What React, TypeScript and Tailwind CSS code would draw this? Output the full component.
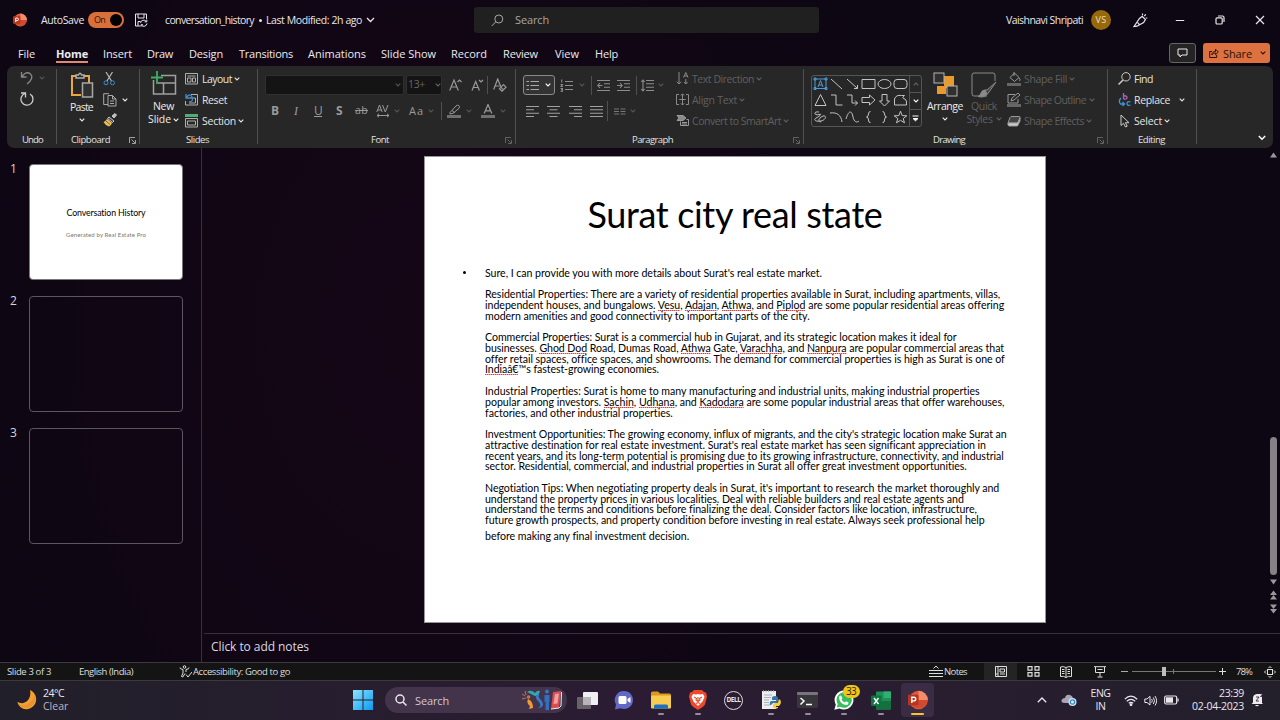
import { useLayoutEffect, useRef, type ReactNode } from 'react';

/* Text run whose tracking is adjusted so that it takes up w pixels. */
function T({ w, className = '', children }: { w: number; className?: string; children: ReactNode }) {
  const ref = useRef<HTMLSpanElement>(null);
  useLayoutEffect(() => {
    const el = ref.current;
    if (!el) return;
    el.style.letterSpacing = '0px';
    const natural = el.getBoundingClientRect().width;
    const count = (el.textContent || '').length;
    el.style.letterSpacing = `${(w - natural) / count}px`;
  }, [w]);
  return (
    <span ref={ref} className={`inline-block shrink-0 whitespace-nowrap ${className}`}>
      {children}
    </span>
  );
}

function Ic({ w, h, className = '', children, sw = 1 }: { w: number; h: number; className?: string; children: ReactNode; sw?: number }) {
  return (
    <svg width={w} height={h} viewBox={`0 0 ${w} ${h}`} fill="none" stroke="currentColor" strokeWidth={sw} className={`block shrink-0 ${className}`}>
      {children}
    </svg>
  );
}

const Chev = ({ className = '' }: { className?: string }) => (
  <Ic w={6} h={4} className={className} sw={1.1}>
    <path d="M.7.7 3 3 5.3.7" />
  </Ic>
);

const Launcher = ({ className = '' }: { className?: string }) => (
  <Ic w={7} h={7} className={className} sw={0.9}>
    <path d="M.5 6V.5H6M2.5 2.5l3.5 3.5M6.5 3v3.5H3" />
  </Ic>
);

const VSep = ({ className = '' }: { className?: string }) => <div className={`w-px shrink-0 bg-[#505050] ${className}`} />;

function PowerPoint({ s }: { s: number }) {
  return (
    <svg width={s} height={s} viewBox="0 0 20 20" className="block shrink-0">
      <circle cx="10.5" cy="10" r="9.3" fill="#e0593a" />
      <path d="M10.5.7a9.3 9.3 0 0 1 9.3 9.3h-9.3z" fill="#f58a6c" />
      <path d="M1.3 10h18.5a9.3 9.3 0 0 1-18.5 0z" fill="#cf4a2e" />
      <rect x="0" y="4.8" width="10.5" height="10.5" rx="1" fill="#b8341c" />
      <path d="M3.8 13V7.2h2.1a1.8 1.8 0 0 1 0 3.7H3.8" fill="none" stroke="#fff" strokeWidth="1.4" />
    </svg>
  );
}

function TitleBar() {
  return (
    <header className="flex h-10 shrink-0 items-center text-[10.5px] text-[#e8e6ea]">
      <div className="ml-[13px]"><PowerPoint s={14} /></div>
      <T w={43} className="ml-[14px] pt-px">AutoSave</T>
      <div className="ml-1 flex h-4 w-9 items-center justify-between rounded-full bg-[#d9703a] pl-[6px] pr-[2px] text-[9px] text-[#2b1408]">
        <T w={11}>On</T>
        <div className="size-3 rounded-full bg-black" />
      </div>
      <Ic w={14} h={14} className="ml-[10px]">
        <path d="M6 13H1.5V1h11v5M4 1v4h6V1M4 13V8.5h2.5M6.5 10a3.2 3.2 0 0 1 5.8-1.5M12.8 6.6v2.2h-2.2M13 10.5a3.2 3.2 0 0 1-5.6 1.7M7 13.8v-2h2" />
      </Ic>
      <T w={89} className="ml-[17px] pt-px">conversation_history</T>
      <div className="ml-[5px] size-[3px] rounded-full bg-[#e8e6ea]" />
      <T w={96} className="ml-[4px] pt-px">Last Modified: 2h ago</T>
      <Ic w={9} h={6} className="ml-1" sw={1.3}><path d="m1 1 3.500 3.500L8 1" /></Ic>
      <div className="ml-[99px] flex h-[26px] w-[345px] items-center rounded-[3px] bg-[#202020] text-[#a8a8a8]">
        <Ic w={13} h={13} className="ml-[17px]"><circle cx="7.8" cy="5" r="4" /><path d="M4.8 7.8.7 12" /></Ic>
        <T w={34} className="ml-[11px] text-[11px]">Search</T>
      </div>
      <T w={77} className="ml-[187px] pt-px">Vaishnavi Shripati</T>
      <div className="ml-[8px] flex size-5 items-center justify-center rounded-full bg-[#96690c] text-[9px] text-[#eadfb8]"><T w={11}>VS</T></div>
      <Ic w={15} h={15} className="ml-[22px]" sw={1.2}>
        <path d="M1 13.5 6.5 5.5l2.700-2.200 3.200 3.200-1.800 3L4 13.200zM1 13.500l3-.3M4 9.500c1.200.2 2.200 1.200 2.600 2.700M9.500 2.200V.5M11.300 3l1.500-1.700M12.700 5h1.600" />
      </Ic>
      <Ic w={10} h={10} className="ml-[27px]"><path d="M.8 5.500h8.400" /></Ic>
      <Ic w={10} h={10} className="ml-[30px]" sw={1.2}><rect x="1" y="2.8" width="6.2" height="6.2" rx="1" /><path d="M3 1h4.500Q9 1 9 2.500V7" /></Ic>
      <Ic w={10} h={10} className="ml-[30px]" sw={1.2}><path d="m1 1 8 8M9 1 1 9" /></Ic>
    </header>
  );
}

function Tabs() {
  return (
    <nav className="flex h-[26px] shrink-0 items-start text-[11px] leading-[15px] text-[#eceaee]">
      <div className="mt-[6px] flex">
        <T w={17} className="ml-[18px]">File</T>
        <div className="ml-[21px] h-[17px] border-b-2 border-[#e08a6a]"><T w={32} className="font-bold">Home</T></div>
        <T w={29} className="ml-[15px]">Insert</T>
        <T w={26} className="ml-[15px]">Draw</T>
        <T w={34} className="ml-[16px]">Design</T>
        <T w={54} className="ml-[16px]">Transitions</T>
        <T w={58} className="ml-[15px]">Animations</T>
        <T w={55} className="ml-[15px]">Slide Show</T>
        <T w={36} className="ml-[15px]">Record</T>
        <T w={35} className="ml-[16px]">Review</T>
        <T w={24} className="ml-[17px]">View</T>
        <T w={23} className="ml-[16px]">Help</T>
      </div>
      <div className="ml-auto mt-[3px] flex h-[20px] w-[27px] items-center justify-center rounded-[3px] border border-[#666] bg-[#242424]">
        <Ic w={11} h={10}><path d="M1 1h9v6H5L3 9V7H1z" /></Ic>
      </div>
      <div className="ml-[7px] mr-[10px] mt-[3px] flex h-[20px] w-[67px] items-center rounded-[3px] bg-[#dd7240] text-[#2a1106]">
        <Ic w={10} h={10} className="ml-[6px]"><path d="M3 3.500H.7v6h7V7M2.800 7C3 4.500 4.500 3.500 6.500 3.500V1.200L9.300 4 6.500 6.600V5C5 5 4 5.400 2.800 7z" /></Ic>
        <T w={29} className="ml-[4px] font-medium">Share</T>
        <Chev className="ml-[8px]" />
      </div>
    </nav>
  );
}

function Group({ width, label, lw, labelPad, launcher, dim, children }: { width: string; label: string; lw: number; labelPad: string; launcher?: boolean; dim?: boolean; children: ReactNode }) {
  return (
    <section className={`flex shrink-0 flex-col ${width}`}>
      <div className="flex h-[67px] items-start">{children}</div>
      <div className={`flex h-[14px] items-center text-[9.5px] leading-[14px] text-[#e4e4e4] ${labelPad}`}>
        <T w={lw}>{label}</T>
        {launcher && <Launcher className={`ml-auto mr-[3px] ${dim ? 'text-[#666]' : 'text-[#b0b0b0]'}`} />}
      </div>
    </section>
  );
}

const GSep = () => <VSep className="mt-[3px] h-[75px]" />;

function Entry({ icon, text, w, chev, dim, gap = 'ml-[3px]' }: { icon: ReactNode; text: string; w: number; chev?: string; dim?: boolean; gap?: string }) {
  return (
    <div className={`flex h-[21px] items-center text-[10.5px] ${dim ? 'text-[#606060]' : 'text-[#e4e4e4]'}`}>
      {icon}
      <T w={w} className={`pt-[2px] ${gap}`}>{text}</T>
      {chev && <Chev className={chev} />}
    </div>
  );
}

const Lines = ({ d, className = '' }: { d: string; className?: string }) => <Ic w={13} h={13} className={className} sw={1.1}><path d={d} /></Ic>;

function FontGroup() {
  return (
    <Group width="w-[257px]" label="Font" lw={18} labelPad="pl-[113px]" launcher dim>
      <div className="flex w-full flex-col pl-[7px] pt-[9px] text-[#9a9a9a]">
        <div className="flex h-[20px] items-center">
          <div className="flex h-[20px] w-[139px] items-center justify-end rounded-[2px] border border-[#303030] bg-[#141414] pr-[2px] text-[#555]"><Chev /></div>
          <div className="ml-[2px] flex h-[20px] w-[36px] items-center rounded-[2px] border border-[#303030] bg-[#141414] pl-px text-[10.5px] text-[#666]"><T w={17}>13+</T><Chev className="ml-[10px]" /></div>
          <Ic w={13} h={14} className="ml-[7px]" sw={1.2}><path d="M.7 12.500 5 2l4.300 10.500M2.300 9h5.400M8.500 4l2-2 2 2" /></Ic>
          <Ic w={13} h={14} className="ml-[9px]" sw={1.2}><path d="M1 12.500 4.700 3.500l3.700 9M2.200 9.500h5M8 2l2 2 2-2" /></Ic>
          <VSep className="ml-[3px] h-[18px]" />
          <Ic w={14} h={14} className="ml-[5px]" sw={1.2}><path d="M.7 11.500 4.700 1l3 7.500M2 8h4.500M6.500 10.700l4-4 2.500 2.500-4 4zM8 9.300l2.500 2.500" /></Ic>
        </div>
        <div className="mt-[6px] flex h-[20px] items-center text-[12px]">
          <T w={7} className="ml-[6px] font-bold">B</T>
          <T w={6} className="ml-[16px] font-['Liberation_Serif'] italic">I</T>
          <T w={8} className="ml-[14px] underline">U</T>
          <T w={7} className="ml-[14px] font-bold">S</T>
          <T w={13} className="ml-[12px] text-[10.5px] line-through">ab</T>
          <Ic w={15} h={14} className="ml-[8px]"><path d="m.8 8 2.700-7 2.700 7M1.800 6h3.500M6.500 1 9.300 8 12 1M1 11.500h12M3 9.800 1 11.500l2 1.700M11 9.800l2 1.700-2 1.700" /></Ic>
          <Chev className="ml-[3px] text-[#555]" />
          <T w={15} className="ml-[9px] text-[11px]">Aa</T>
          <Chev className="ml-[4px] text-[#555]" />
          <VSep className="ml-[7px] h-[18px]" />
          <Ic w={14} h={14} className="ml-[5px]"><path d="M3 8.500 9 2q1.500-1.500 2.800-.5t.2 2.800l-6 5-3 .7zM5 6.500l3 2.500" /><rect x="0" y="11" width="14" height="3" fill="#707070" stroke="none" /></Ic>
          <Chev className="ml-[5px] text-[#555]" />
          <Ic w={14} h={14} className="ml-[9px]" sw={1.2}><path d="m3.200 9.500 3.800-9 3.800 9M4.500 6.800h5" /><rect x="0" y="11" width="14" height="3" fill="#707070" stroke="none" /></Ic>
          <Chev className="ml-[5px] text-[#555]" />
        </div>
      </div>
    </Group>
  );
}

function ParagraphGroup() {
  return (
    <Group width="w-[287px]" label="Paragraph" lw={41} labelPad="pl-[116px]" launcher dim>
      <div className="flex w-[160px] shrink-0 flex-col pl-[7px] pt-[9px] text-[#8c8c8c]">
        <div className="flex h-[20px] items-center">
          <div className="flex h-[20px] w-[32px] items-center rounded-[3px] border border-[#8a8a8a] bg-[#333] pl-[2px] text-[#aaa]">
            <Lines d="M4.500 2.500H13M4.500 6.500H13M4.500 10.500H13M.5 2.500h2.500M.5 6.500h2.500M.5 10.500h2.500" />
            <Chev className="ml-[6px] text-white" />
          </div>
          <Lines className="ml-[5px]" d="M5 2.500h8M5 6.500h8M5 10.500h8M1.700.5v3M.5 5.500h2L1 7.500h2M.5 9.500h2v1.300H1h1.500v1.500H.5" />
          <Chev className="ml-[6px] text-[#555]" />
          <VSep className="ml-[6px] h-[19px]" />
          <Lines className="ml-[5px]" d="M0 1.500h13M7 4.800h6M7 8.200h6M0 11.500h13M5.500 6.500H.8M3 4 .8 6.500 3 9" />
          <Lines className="ml-[7px]" d="M0 1.500h13M7 4.800h6M7 8.200h6M0 11.500h13M0 6.500h5M3 4l2.200 2.500L3 9" />
          <VSep className="ml-[6px] h-[19px]" />
          <Lines className="ml-[4px]" d="M5 1.500h8M5 4.800h8M5 8.200h8M5 11.500h8M2 .8v11.400M.3 3 2 1l1.700 2M.3 10 2 12l1.700-2" />
          <Chev className="ml-[4px] text-[#555]" />
        </div>
        <div className="mt-[6px] flex h-[20px] items-center text-[#a0a0a0]">
          <Lines className="ml-[3px]" d="M0 1.500h13M0 4.800h8M0 8.200h13M0 11.500h8" />
          <Lines className="ml-[8px]" d="M0 1.500h13M2.500 4.800h8M0 8.200h13M2.500 11.500h8" />
          <Lines className="ml-[9px]" d="M0 1.500h13M5 4.800h8M0 8.200h13M5 11.500h8" />
          <Lines className="ml-[8px]" d="M0 1.500h13M0 4.800h13M0 8.200h13M0 11.500h13" />
          <VSep className="ml-[4px] h-[20px]" />
          <Lines className="ml-[6px] text-[#777]" d="M0 4h5M0 6.500h5M0 9h5M6.500 4h5M6.500 6.500h5M6.500 9h5" />
          <Chev className="ml-[3px] text-[#555]" />
        </div>
      </div>
      <div className="mt-[2px] flex flex-col">
        <Entry dim w={62} text="Text Direction" chev="ml-[2px]" icon={<Ic w={13} h={13} className="text-[#8a8a8a]"><path d="M3 0v12M.8 9.700 3 12l2.200-2.300M7.500 5.500 9.800.5l2.200 5M8.300 4h3M9.800 12V7M8 10l1.800 2 1.800-2" /></Ic>} />
        <Entry dim w={45} text="Align Text" chev="ml-[2px]" icon={<Ic w={13} h={13} className="text-[#8a8a8a]"><path d="M3 1.500H.5v10H3M10 1.500h2.500v10H10M6.500 1v11M3.200 6.500h6.600M4.800 2.500 6.500.8l1.700 1.700M4.800 10.300 6.500 12l1.700-1.700" /></Ic>} />
        <Entry dim w={89} text="Convert to SmartArt" chev="ml-[2px]" icon={<Ic w={13} h={13} className="text-[#9a9a9a]"><path d="M1 1.500h6L10 4 7 6.500H1L3 4z" fill="#8a8a8a" /><path d="M4.500 7.500v4h8v-6h-2M6 8.500h5M6 10h5" /></Ic>} />
      </div>
    </Group>
  );
}

const shapes = [
  '', 'M2 2l11 10', 'M2 2l10.500 9.500M12.500 8v3.500H9', 'M1 2.500h13v9H1z', 'M14 7A6.500 4.500 0 1 1 1 7a6.500 4.500 0 0 1 13 0z', 'M4 2.500h7q3 0 3 3v3q0 3-3 3H4q-3 0-3-3v-3q0-3 3-3z',
  'M7.500 1.500 13 12.500H2z', 'M2 2h5v10h6.500', 'M2 2h5v8h5.500M10 7.500l2.500 2.500L10 12.500', 'M1 4.500h7.500V2L14 7l-5.500 5V9.500H1z', 'M5 1.500h5V8h2.500L7.500 13 2.500 8H5z', 'M1.500 12V6Q3 1.500 8.500 2.500h3Q8 5.500 12 6q2 1 1.500 6z',
  'M6 2C0 1 1 6 6 4.500 10 3 6 7 3 8c-3 2 0 4 5 3 5-1 6-6 2-5-4 2-6 5-2 6', 'M1 3c7-1 11 2 12 9', 'M1 9C4-1 7 1 8 7c1 5 4 6 6 4', 'M9.500 1.500Q7.500 1.500 7.500 4T5.500 7q2 0 2 3t2 2.500', 'M5.500 1.500Q7.500 1.500 7.500 4T9.500 7q-2 0-2 3t-2 2.500', 'M7.500 1.200 9.200 5.600l4.600.2-3.600 2.800 1.300 4.200-4-2.500-4 2.500 1.300-4.200L1.200 5.800l4.600-.2z',
];

function DrawingGroup() {
  return (
    <Group width="w-[303px]" label="Drawing" lw={32} labelPad="pl-[129px]" launcher dim>
      <div className="ml-[7px] mt-[9px] flex h-[52px] w-[111px] rounded-[3px] border border-[#555]">
        <div className="grid w-[97px] grid-cols-6 grid-rows-3 pl-px pt-px text-[#c4c4c4]">
          {shapes.map((d, i) =>
            i === 0 ? (
              <Ic key={i} w={15} h={14} className="text-[#4a9bd8]"><rect x="2" y="2" width="11" height="9.500" /><path d="m5 10 2.500-6.500L10 10M6 8h3M1 1h2v2H1zM12 1h2v2h-2zM1 10.500h2v2H1zM12 10.500h2v2h-2z" /></Ic>
            ) : (
              <Ic key={i} w={15} h={14}><path d={d} /></Ic>
            ),
          )}
        </div>
        <div className="flex w-[12px] flex-col divide-y divide-[#555] border-l border-[#555]">
          <div className="flex flex-1 items-center justify-center text-[#666]"><Chev className="rotate-180" /></div>
          <div className="flex flex-1 items-center justify-center text-white"><Chev /></div>
          <div className="flex flex-1 items-center justify-center text-white"><Ic w={7} h={7}><path d="M.5 1h6M1 3.500l2.500 2.300L6 3.500z" fill="currentColor" /></Ic></div>
        </div>
      </div>
      <div className="ml-[5px] flex w-[36px] flex-col items-center pt-[6px] text-[10.5px] leading-[14px] text-[#ececec]">
        <Ic w={25} h={25}><path d="M11 4h10v12h-8v6H4v-8h7z" fill="#e99a2b" stroke="none" /><rect x="1" y="1" width="10" height="10" fill="#303030" stroke="#b5b5b5" /><rect x="14" y="14" width="10" height="10" fill="#303030" stroke="#b5b5b5" /></Ic>
        <T w={36} className="mt-[2px]">Arrange</T>
        <Chev className="mt-[4px]" />
      </div>
      <div className="ml-[4px] flex w-[34px] flex-col items-center pt-[6px] text-[10.5px] leading-[14px] text-[#606060]">
        <Ic w={26} h={26} className="text-[#8a8a8a]"><path d="M16 24H3q-2 0-2-2V3q0-2 2-2h19q2 0 2 2v6" /><path d="M25 10 16 18l-2 0 0 2 2.500 2L18 20z" fill="#444" /><path d="M14 18q-3 0-4 3-1 3-3 3.500 6 1.500 9-2z" fill="#8a8a8a" /></Ic>
        <T w={26} className="mt-px">Quick</T>
        <div className="-mt-px flex items-center"><T w={26}>Styles</T><Chev className="ml-[3px]" /></div>
      </div>
      <div className="ml-[6px] mt-[2px] flex flex-col">
        <Entry dim w={43} text="Shape Fill" chev="ml-[2px]" icon={<Ic w={14} h={14} className="text-[#999]"><path d="M3 5.500 7.500 1 12 5.500 7.500 9.500zM7 0v4M12 6q2 2 .5 3" /><rect y="11" width="14" height="3" fill="#666" stroke="none" /></Ic>} />
        <Entry dim w={62} text="Shape Outline" chev="ml-[3px]" icon={<Ic w={14} h={14} className="text-[#999]"><path d="M8 1.500H1V10h10V6M4 8l1-3 6-5 2 2-6 5z" /><rect y="11" width="14" height="3" fill="#666" stroke="none" /></Ic>} />
        <Entry dim w={60} text="Shape Effects" chev="ml-[2px]" icon={<Ic w={14} h={14} className="text-[#999]"><path d="M4 2.500h8q1.500 0 1 1.500l-2 5H1L3 3.500z" fill="#444" /><path d="M1 9h9.500l2.500-5v3l-2.500 5H2q-1.500 0-1-3z" fill="#ccc" /></Ic>} />
      </div>
    </Group>
  );
}

function Ribbon() {
  return (
    <div className="mx-[7px] flex h-[82px] shrink-0 rounded-[7px] bg-[#272727]">
      <Group width="w-[49px]" label="Undo" lw={21} labelPad="pl-[15px]">
        <div className="flex flex-col pl-[13px] pt-[5px]">
          <div className="flex items-center text-[#888]">
            <Ic w={14} h={14} sw={1.3}><path d="M1.500 1v5h5M1.800 5.800Q6-.5 10.500 3q4 4-3.500 10" /></Ic>
            <Chev className="ml-[5px] text-[#555]" />
          </div>
          <Ic w={14} h={15} className="mt-[7px] text-[#ccc]" sw={1.3}><path d="M1 1h4.500v4.500M5 1.500A6 6 0 1 0 10 2" /></Ic>
        </div>
      </Group>
      <GSep />
      <Group width="w-[82px]" label="Clipboard" lw={39} labelPad="pl-[14px]" launcher>
        <div className="ml-[12px] flex w-[25px] flex-col items-center pt-[6px] text-[10.5px] leading-[14px] text-[#ececec]">
          <Ic w={24} h={26} sw={1.5}><path d="M11 23H2V4h4M14 4h5v7" stroke="#eda53f" strokeWidth="2" /><path d="M6 6V3h2.500q1.500-3.500 3 0H14v3z" stroke="#b0b0b0" /><path d="M12.500 11h10v14h-10z" fill="#303030" stroke="#a8a8a8" /></Ic>
          <T w={23} className="mt-[2px]">Paste</T>
          <Chev className="mt-[4px]" />
        </div>
        <div className="ml-[9px] flex flex-col pt-[6px]">
          <Ic w={13} h={14}><path d="m3 0 5.500 9M9.500 0 4 9" stroke="#b8b8b8" strokeWidth="1.200" /><circle cx="3" cy="10.800" r="2" stroke="#3f8ccc" /><circle cx="9.500" cy="10.800" r="2" stroke="#3f8ccc" /></Ic>
          <div className="mt-[7px] flex items-center text-[#ececec]">
            <Ic w={14} h={14} className="text-[#aaa]"><path d="M5 11.500H.7V.7H6M5 2.500h4.500l3.500 3.500v7H5zM9.500 2.500V6H13M7 8h4M7 10.500h4" /></Ic>
            <Chev className="ml-[5px]" />
          </div>
          <Ic w={14} h={14} className="mt-[6px]"><path d="m9 3 3-2.500L13.500 2 11 5z" fill="#bbb" stroke="#ccc" /><path d="m6 4 5 4-1.500 1.500L4.500 5.500z" fill="#444" stroke="#ccc" /><path d="m4 6 5 4q-1 3-3 3.500Q2 12 .5 9q2-.5 3.500-3z" fill="#edbd62" stroke="none" /><path d="m3 8 4 3.500" stroke="#805a20" /></Ic>
        </div>
      </Group>
      <GSep />
      <Group width="w-[117px]" label="Slides" lw={23} labelPad="pl-[46px]">
        <div className="ml-[7px] flex w-[33px] flex-col items-center pt-[5px] text-[10.5px] leading-[13px] text-[#ececec]">
          <Ic w={26} h={26} className="text-[#a0a0a0]" sw={1.5}><path d="M10 4.500h14.500V23H2.500V9M7 12h17.500M12.500 12v11" /><path d="M6 0v13M0 6.500h12" stroke="#3fae68" strokeWidth="1.800" /></Ic>
          <T w={21} className="mt-[3px]">New</T>
          <div className="flex items-center"><T w={23}>Slide</T><Chev className="ml-[2px]" /></div>
        </div>
        <div className="ml-[5px] mt-[2px] flex flex-col">
          <Entry gap="ml-[4px]" w={30} text="Layout" chev="ml-[2px]" icon={<Ic w={13} h={12} className="text-[#b0b0b0]"><path d="M.5.5h12v10.500H.5zM2.500 3h8M2.500 5h3.500v4H2.500zM7.500 5h3v4h-3z" /></Ic>} />
          <Entry gap="ml-[4px]" w={25} text="Reset" icon={<Ic w={13} h={13} className="text-[#b0b0b0]"><path d="M6 1.500h6.500V12H.5V8M5 5h5.500v5H4" /><path d="M1 1v4h4M1.300 4.500Q5-.5 7 4T4 9" stroke="#3f8ccc" strokeWidth="1.300" /></Ic>} />
          <Entry gap="ml-[4px]" w={34} text="Section" chev="ml-[2px]" icon={<Ic w={13} h={14} className="text-[#b0b0b0]"><path d="M0 1.500h13" stroke="#4fae70" strokeWidth="3" /><path d="M.5 4.500h12V13H.5zM2.500 7h8v4h-8z" /></Ic>} />
        </div>
      </Group>
      <GSep />
      <FontGroup />
      <GSep />
      <ParagraphGroup />
      <GSep />
      <DrawingGroup />
      <GSep />
      <Group width="w-[88px]" label="Editing" lw={27} labelPad="pl-[30px]">
        <div className="ml-[10px] mt-[2px] flex flex-col">
          <Entry w={19} text="Find" icon={<Ic w={13} h={13} className="text-[#ccc]"><circle cx="8" cy="4.800" r="4.200" /><path d="M5 8 .5 12.500" strokeWidth="1.500" /></Ic>} />
          <Entry w={36} text="Replace" chev="ml-[9px]" icon={<Ic w={13} h={14} sw={1.3}><path d="M5.500 0v6M5.500 3.500q1.500-1.500 3 0t-.5 2.500-2.500-1" stroke="#b060b8" /><path d="M3 5Q0 8 2.500 11H6M4.500 9 6.500 11l-2 2M12.500 9q-3.500-1-3.500 1.500t3.500 1.500" stroke="#4095d4" /></Ic>} />
          <Entry w={28} text="Select" chev="ml-[2px]" icon={<Ic w={13} h={14} className="text-[#ccc]"><path d="M3 1v10.500l2.500-2.200L7.500 13l1.700-.8-1.800-3.500H11z" /></Ic>} />
        </div>
      </Group>
      <GSep />
      <Ic w={8} h={6} className="ml-auto mr-[7px] mt-[69px] text-white" sw={1.5}><path d="M.8 1 4 4.200 7.200 1" /></Ic>
    </div>
  );
}

const Sp = ({ children }: { children: ReactNode }) => (
  <span className="bg-[repeating-linear-gradient(90deg,#e23c3c_0_1px,#f4a3a3_1px_2px)] bg-[length:100%_1px] bg-bottom bg-no-repeat">{children}</span>
);

const body: { w: number; t: ReactNode }[][] = [
  [{ w: 337, t: "Sure, I can provide you with more details about Surat's real estate market." }],
  [
    { w: 516, t: 'Residential Properties: There are a variety of residential properties available in Surat, including apartments, villas,' },
    { w: 519, t: <>independent houses, and bungalows. <Sp>Vesu</Sp>, <Sp>Adajan</Sp>, <Sp>Athwa</Sp>, and <Sp>Piplod</Sp> are some popular residential areas offering</> },
    { w: 325, t: 'modern amenities and good connectivity to important parts of the city.' },
  ],
  [
    { w: 472, t: 'Commercial Properties: Surat is a commercial hub in Gujarat, and its strategic location makes it ideal for' },
    { w: 519, t: <>businesses. <Sp>Ghod Dod</Sp> Road, Dumas Road, <Sp>Athwa</Sp> Gate, <Sp>Varachha</Sp>, and <Sp>Nanpura</Sp> are popular commercial areas that</> },
    { w: 519, t: 'offer retail spaces, office spaces, and showrooms. The demand for commercial properties is high as Surat is one of' },
    { w: 174, t: <><Sp>Indiaâ€</Sp>™s fastest-growing economies.</> },
  ],
  [
    { w: 495, t: 'Industrial Properties: Surat is home to many manufacturing and industrial units, making industrial properties' },
    { w: 519, t: <>popular among investors. <Sp>Sachin</Sp>, <Sp>Udhana</Sp>, and <Sp>Kadodara</Sp> are some popular industrial areas that offer warehouses,</> },
    { w: 188, t: 'factories, and other industrial properties.' },
  ],
  [
    { w: 522, t: "Investment Opportunities: The growing economy, influx of migrants, and the city's strategic location make Surat an" },
    { w: 501, t: "attractive destination for real estate investment. Surat's real estate market has seen significant appreciation in" },
    { w: 519, t: 'recent years, and its long-term potential is promising due to its growing infrastructure, connectivity, and industrial' },
    { w: 482, t: 'sector. Residential, commercial, and industrial properties in Surat all offer great investment opportunities.' },
  ],
  [
    { w: 515, t: "Negotiation Tips: When negotiating property deals in Surat, it's important to research the market thoroughly and" },
    { w: 479, t: 'understand the property prices in various localities. Deal with reliable builders and real estate agents and' },
    { w: 492, t: 'understand the terms and conditions before finalizing the deal. Consider factors like location, infrastructure,' },
    { w: 500, t: 'future growth prospects, and property condition before investing in real estate. Always seek professional help' },
  ],
];

function Slide() {
  return (
    <article className="ml-[222px] mt-2 flex h-[467px] w-[622px] shrink-0 flex-col border border-[#99949c] bg-white font-['Lato','Noto_Sans',sans-serif] text-black">
      <h1 className="mt-[33px] flex h-[48px] items-center justify-center text-[36px] leading-[48px]"><T w={295}>Surat city real state</T></h1>
      <div className="mt-[29.6px] flex text-[10.6px] leading-[10.76px]">
        <div className="ml-[37px] w-[23px] pt-[3px]"><div className="ml-px size-[3px] rounded-full bg-black" /></div>
        <div className="flex flex-col gap-[10.76px]">
          {body.map((p, i) => (
            <div key={i} className="flex flex-col items-start">
              {p.map((l, j) => <T key={j} w={l.w}>{l.t}</T>)}
              {i === body.length - 1 && <T w={204} className="mt-[5px]">before making any final investment decision.</T>}
            </div>
          ))}
        </div>
      </div>
    </article>
  );
}

function Workspace() {
  return (
    <main className="flex h-[514px] shrink-0">
      <aside className="flex w-[202px] shrink-0 flex-col gap-4 border-r border-[#37313c] pt-4 text-[12px] leading-[9px] text-[#d8d4dc]">
        {[1, 2, 3].map((n) => (
          <div key={n} className="flex">
            <span className="w-[29px] pl-[10px]">{n}</span>
            {n === 1 ? (
              <div className="flex h-[116px] w-[154px] flex-col items-center rounded-[4px] border border-[#777] bg-white font-['Lato',sans-serif]">
                <T w={79} className="mt-[42px] text-[8.8px] leading-[12px] text-black">Conversation History</T>
                <T w={80} className="mt-[12px] text-[6px] leading-[8px] text-[#777]">Generated by Real Estate Pro</T>
              </div>
            ) : (
              <div className="h-[116px] w-[154px] rounded-[4px] border border-[#5c5662]" />
            )}
          </div>
        ))}
      </aside>
      <div className="flex flex-1 flex-col">
        <div className="flex h-[485px]">
          <Slide />
          <div className="ml-auto mr-[2px] flex w-[9px] flex-col items-center text-[#9a979c]">
            <Ic w={9} h={6} className="mt-[4px]"><path d="M1 5.500 4.500.5 8 5.500z" fill="currentColor" stroke="none" /></Ic>
            <div className="mt-[279px] h-[138px] w-[7px] rounded-full bg-[#858287]" />
            <Ic w={9} h={6} className="mt-[4px]"><path d="M1 .5 4.500 5.500 8 .5z" fill="currentColor" stroke="none" /></Ic>
            <Ic w={9} h={10} className="mt-[5px]"><path d="M1 5 4.500.5 8 5zM1 9.500 4.500 5 8 9.500z" fill="currentColor" stroke="none" /></Ic>
            <Ic w={9} h={10} className="mt-[4px]"><path d="M1 .5 4.500 5 8 .5zM1 5l3.500 4.500L8 5z" fill="currentColor" stroke="none" /></Ic>
          </div>
        </div>
        <div className="ml-[2px] flex flex-1 items-center border-t border-[#37313c] pb-[2px] pl-[7px] text-[12px] text-[#dcd8e0]"><T w={98}>Click to add notes</T></div>
      </div>
    </main>
  );
}

function StatusBar() {
  return (
    <footer className="flex h-[19px] shrink-0 items-center border-y border-[#3b383e] bg-[#141414] text-[9.5px] text-[#dedede]">
      <T w={44} className="ml-[7px] pt-px">Slide 3 of 3</T>
      <T w={54} className="ml-[28px] pt-px">English (India)</T>
      <Ic w={13} h={13} className="ml-[46px]"><circle cx="5.500" cy="2" r="1.300" /><path d="M1 2.500Q.5 4 4 4.500V8l-1.500 3.500 1.300.5L6 8.500M10 2.500q.5 1.500-3 2V7M7 9.500l2 2.500 4-5" /></Ic>
      <T w={97} className="ml-px pt-px">Accessibility: Good to go</T>
      <Ic w={14} h={13} className="ml-[639px]"><path d="M0 5.500h14M0 8.500h14M0 11.500h14M4.500 3.500 7 1l2.500 2.500" /></Ic>
      <T w={23} className="ml-px pt-px">Notes</T>
      <div className="ml-[17px] flex h-[17px] w-[33px] items-center justify-center bg-[#242424]"><Ic w={12} h={11}><path d="M.5.5h11v10H.5zM3 .5v10M.5 8H3M5 3h4.500v3H5zM5 8h5" /></Ic></div>
      <Ic w={13} h={11} className="ml-[10px]" sw={1.2}><path d="M1 .7h4v3.500H1zM8 .7h4v3.500H8zM1 6.700h4v3.500H1zM8 6.700h4v3.500H8z" /></Ic>
      <Ic w={12} h={12} className="ml-[20px]"><path d="M6 1.500v10M6 1.500Q3 0 .5 1v9.500q3-.8 5.500 1 2.500-1.800 5.500-1V1Q9 0 6 1.500M2 3.500h2.500M2 5.500h2.500M2 7.500h2.500M7.500 3.500H10M7.500 5.500H10M7.500 7.500H10" /></Ic>
      <Ic w={12} h={12} className="ml-[22px]"><path d="M0 .7h12M1.500 1v5.500h9V1M6 6.500v4M3.500 11h5M3.500 3.500h5" /></Ic>
      <Ic w={7} h={7} className="ml-[15px] text-[#aaa]"><path d="M0 3.500h7" /></Ic>
      <Ic w={84} h={11} className="ml-[4px] text-[#777]"><path d="M0 5.500h84M41.500 3v5" /><rect x="30" y="1" width="4" height="9" fill="#bdbdbd" stroke="none" /></Ic>
      <Ic w={7} h={7} className="ml-[3px]"><path d="M0 3.500h7M3.500 0v7" /></Ic>
      <T w={16} className="ml-[10px] pt-px">78%</T>
      <Ic w={12} h={12} className="ml-[12px]"><rect x="3.500" y="3.500" width="5" height="5" /><path d="M4.500 2 6 .5 7.500 2M4.500 10 6 11.500 7.500 10M2 4.500.5 6 2 7.500M10 4.500 11.500 6 10 7.500" /></Ic>
    </footer>
  );
}

function TaskIcon({ ml, children, on = true, active }: { ml: string; children: ReactNode; on?: boolean; active?: boolean }) {
  return (
    <div className={`flex h-[34px] w-[33px] shrink-0 flex-col items-center rounded-[4px] pt-[7px] ${ml} ${active ? 'bg-[#3b2c46]' : ''}`}>
      <div className="flex h-[20px] items-center">{children}</div>
      {active ? <div className="mt-[3px] h-[2px] w-[13px] rounded-full bg-[#f3c52f]" /> : on ? <div className="mt-[3px] h-[2px] w-[6px] rounded-full bg-[#958b9b]" /> : null}
    </div>
  );
}

function Taskbar() {
  return (
    <div className="flex h-[39px] shrink-0 items-center bg-gradient-to-r from-[#211f29] via-[#2b1c33] to-[#231f2b] pb-px text-[10.5px] text-[#ebe6ee]">
      <svg width="20" height="20" viewBox="0 0 20 20" className="ml-[17px] shrink-0"><path d="M13 0c9 4 8 17-2 19C6 20 2 17 .3 12 8 16 15 9 13 0z" fill="#f1a233" /><path d="M18 5c3 9-8 18-17 9 7 4 14-1 17-9z" fill="#e8802a" opacity=".5" /></svg>
      <div className="ml-[6px] flex w-[24px] flex-col leading-[13px]"><T w={22}>24°C</T><T w={24} className="text-[#bdb6c2]">Clear</T></div>
      <svg width="20" height="20" viewBox="0 0 20 20" className="ml-[286px] shrink-0"><defs><linearGradient id="win" x1="0" y1="0" x2="1" y2="1"><stop stopColor="#8ce4ff" /><stop offset="1" stopColor="#0b9af0" /></linearGradient></defs><path d="M0 0h9.500v9.500H0zM10.500 0H20v9.500h-9.500zM0 10.500h9.500V20H0zM10.500 10.500H20V20h-9.500z" fill="url(#win)" /></svg>
      <div className="ml-[12px] flex h-[26px] w-[182px] shrink-0 items-center rounded-full bg-[#43344b]">
        <Ic w={12} h={12} className="ml-[10px]" sw={1.5}><circle cx="5" cy="5" r="4" /><path d="m8 8 3.500 3.500" /></Ic>
        <T w={34} className="ml-[8px] pt-[2px] text-[11px] text-[#cfc8d4]">Search</T>
        <svg width="42" height="22" viewBox="0 0 42 22" className="ml-[72px] shrink-0">
          <path d="M1 5l3 2M4 2l1 4M1 10l4-1" stroke="#c07a4a" strokeWidth="1" />
          <circle cx="7.500" cy="8" r="1.800" fill="#c07a4a" /><path d="M7 10q5 2 5 9l-4 1 1-3q-4-3-2-7z" fill="#f09a35" />
          <path d="M6 3q4-3 8 1 2-3 5-2-1 3-2 5l-3 0-4-2q-2-1-4-2z" fill="#35a4b0" /><path d="M15 6q-1 4 3 7 3 4-1 6 5 0 5-4 0-3-3-5-2-2-1-4z" fill="#3878c8" />
          <circle cx="26" cy="2.500" r="2" fill="#3974c4" /><path d="M23.500 6h5v7H28v8h-3.500v-8h-1z" fill="#336fc0" />
          <path d="m32 3 8-1-2 17-8 1z" fill="#d94c50" /><path d="m34 5 4-.5-1.500 10-4 .5z" fill="#f0a0a0" /><path d="m30 20 8-1 2-2 .5-14" stroke="#eee" fill="none" />
        </svg>
      </div>
      <TaskIcon ml="ml-[4px]" on={false}><svg width="21" height="19" viewBox="0 0 21 19"><rect y="6" width="14" height="12" rx="1" fill="#666268" /><rect x="6" y="1" width="15" height="13" rx="1" fill="#f0eff1" /><rect x="6" y="6" width="8" height="8" fill="#b8b5ba" /></svg></TaskIcon>
      <TaskIcon ml="ml-[3px]" on={false}><svg width="20" height="20" viewBox="0 0 20 20"><path d="M10 1a9 9 0 1 1-3.500 17.300L1 19.500 2 14.500A9 9 0 0 1 10 1z" fill="#6269c5" /><rect x="4.500" y="6" width="8" height="8" rx="1.500" fill="#fff" /><path d="m13.500 9 3-2v6l-3-2z" fill="#fff" /></svg></TaskIcon>
      <TaskIcon ml="ml-[4px]"><svg width="20" height="18" viewBox="0 0 20 18"><path d="M0 2q0-1.500 1.500-1.500H7l2 2h9.500Q20 2.500 20 4v5H0z" fill="#d99b1c" /><rect y="4.500" width="20" height="13" rx="1" fill="#f7cc50" /><path d="M3 17.500V15q0-1.500 1.500-1.500h11Q17 13.500 17 15v2.500z" fill="#1b72c4" /></svg></TaskIcon>
      <TaskIcon ml="ml-[4px]"><svg width="18" height="20" viewBox="0 0 18 20"><path d="M5 0h8l2 2 2 .5 1 4-2 8q-1 2-7 5.500-6-3.500-7-5.500L0 6.500l1-4L3 2z" fill="#f0482a" /><path d="m4 4 3 .5L9 4l2 .5 3-.5 1.500 3-2 4.500-3 3-1.500 1.500-1.500-1.500-3-3L2.500 7z" fill="#fff" /><path d="m5 7 2.500 1.500L7 10l2 1.500 2-1.500-.5-1.500L13 7M9 7v4M7 13.500l2-1 2 1" stroke="#f0482a" fill="none" strokeWidth="1.100" /></svg></TaskIcon>
      <TaskIcon ml="ml-[3px]" on={false}><div className="flex size-[19px] items-center justify-center rounded-full border border-[#ddd8e0] text-[6.5px] font-bold"><T w={14}>DELL</T></div></TaskIcon>
      <TaskIcon ml="ml-[4px]"><svg width="20" height="20" viewBox="0 0 20 20"><path d="M1 1h14v18H1z" fill="#eceef0" /><path d="M2.500 0v2M5 0v2M7.500 0v2M10 0v2M12.500 0v2M3 5h8M3 7.500h7M3 10h5M3 12.500h5M3 15h6" stroke="#98a0a8" strokeWidth=".8" /><path d="M14 6q3 0 3 2v3q0 2-3 2h-2l-2 2H9q-1-4 2-4h4V10h-4V8q0-2 3-2z" fill="#3776ab" /><path d="M17.500 9.500H19q1.500 2 .5 4.500L18 16h-3v1h2v1q-4 2-5-1v-2q0-2 2-2h2q1.500 0 1.500-3.500z" fill="#f6ce46" /></svg></TaskIcon>
      <TaskIcon ml="ml-[4px]"><svg width="21" height="18" viewBox="0 0 21 18"><rect y="1" width="21" height="16" rx="1.500" fill="#38363a" /><rect y="1" width="21" height="3" rx="1" fill="#77747a" /><path d="m3.500 7 3.500 3-3.500 3.500M9 13.500h6" stroke="#fff" strokeWidth="1.500" fill="none" /></svg></TaskIcon>
      <TaskIcon ml="ml-[3px]">
        <div className="relative">
          <svg width="20" height="20" viewBox="0 0 20 20"><path d="M10 .5a9.500 9.500 0 1 1-4.500 17.900L.3 19.700l1.500-5A9.500 9.500 0 0 1 10 .5z" fill="#fff" /><path d="M10 2.200a7.800 7.800 0 1 1-4 14.500L2.700 17.500 3.700 14A7.800 7.800 0 0 1 10 2.200z" fill="#38bd5c" /><path d="M7 5.500 8.500 8l-1 1.500q1 2 3.200 3l1.300-1.300 2.500 1.200q0 2.500-2.500 2.500-6-1-7-7 0-2.500 2-2.400z" fill="#fff" /></svg>
          <div className="absolute -top-[5px] left-[9px] flex h-[13px] w-[17px] items-center justify-center rounded-full bg-[#f2c51b] text-[10px] text-[#271d08]"><T w={10}>33</T></div>
        </div>
      </TaskIcon>
      <TaskIcon ml="ml-[4px]"><svg width="20" height="19" viewBox="0 0 20 19"><rect x="5" y=".5" width="15" height="18" rx="1" fill="#1d9058" /><path d="M12.500.5H20V7h-7.500z" fill="#2fb071" /><path d="M5 10h15v8.500H5z" fill="#14703f" /><rect y="4.500" width="10.500" height="10.500" rx="1" fill="#0d753d" /><path d="m3 7 4.500 6M7.500 7 3 13" stroke="#fff" strokeWidth="1.400" /></svg></TaskIcon>
      <TaskIcon ml="ml-[4px]" active><PowerPoint s={20} /></TaskIcon>
      <Ic w={10} h={6} className="ml-[103px]" sw={1.3}><path d="M.8 5.200 5 1l4.200 4.200" /></Ic>
      <svg width="16" height="14" viewBox="0 0 16 14" className="ml-[14px] shrink-0"><path d="M4 10Q0 10 .5 7.500T4 5q1-4 5-3 3 1 3 4 2 1 2 4z" fill="#a9a6b4" /><circle cx="11.500" cy="9" r="4" fill="#d6e6f2" /><circle cx="11.500" cy="9" r="2.200" fill="none" stroke="#2f88c8" strokeWidth="1.200" /></svg>
      <div className="ml-[13px] flex w-[21px] flex-col items-center leading-[13px]"><T w={20}>ENG</T><T w={10}>IN</T></div>
      <Ic w={14} h={11} className="ml-[13px]" sw={1.2}><path d="M.8 4.200q6-6 12.400 0M2.800 6.300q4.200-4 8.400 0M4.800 8.300q2.200-2 4.400 0" /><circle cx="7" cy="9.700" r=".8" fill="currentColor" /></Ic>
      <Ic w={13} h={11} className="ml-[6px]"><path d="M.8 4v3.500H3L6 10V1.300L3 4zM7.700 4q1.200 1.700 0 3.500M9.300 2.500q2.500 3.200 0 6.500M11 1q3.200 4.700 0 9.500" /></Ic>
      <Ic w={15} h={10} className="ml-[7px]" sw={1.2}><rect x=".7" y="1" width="12" height="8" rx="1.500" /><rect x="2" y="2.300" width="7" height="5.400" fill="currentColor" stroke="none" /><path d="M14 3.500v3" /></Ic>
      <div className="ml-[12px] flex w-[53px] flex-col items-end leading-[13px]"><T w={25}>23:39</T><T w={52}>02-04-2023</T></div>
      <svg width="13" height="14" viewBox="0 0 13 14" className="ml-[7px] shrink-0"><path d="M2 9.500V5q0-3.500 4-4h5v9l1 1H.5zM4 12h4q-2 2.500-4 0z" fill="#eeeaf0" /><path d="M5 4h3L5 8h3M9.500.8H12L9.500 3.500H12" stroke="#352a3c" fill="none" strokeWidth=".9" /></svg>
    </div>
  );
}

export default function App() {
  return (
    <div className="flex h-[720px] w-[1280px] flex-col overflow-hidden bg-[radial-gradient(ellipse_500px_700px_at_420px_330px,#150616_0%,#0d0613_100%)] font-['Open_Sans','Noto_Sans',sans-serif]">
      <TitleBar />
      <Tabs />
      <Ribbon />
      <Workspace />
      <StatusBar />
      <Taskbar />
    </div>
  );
}
